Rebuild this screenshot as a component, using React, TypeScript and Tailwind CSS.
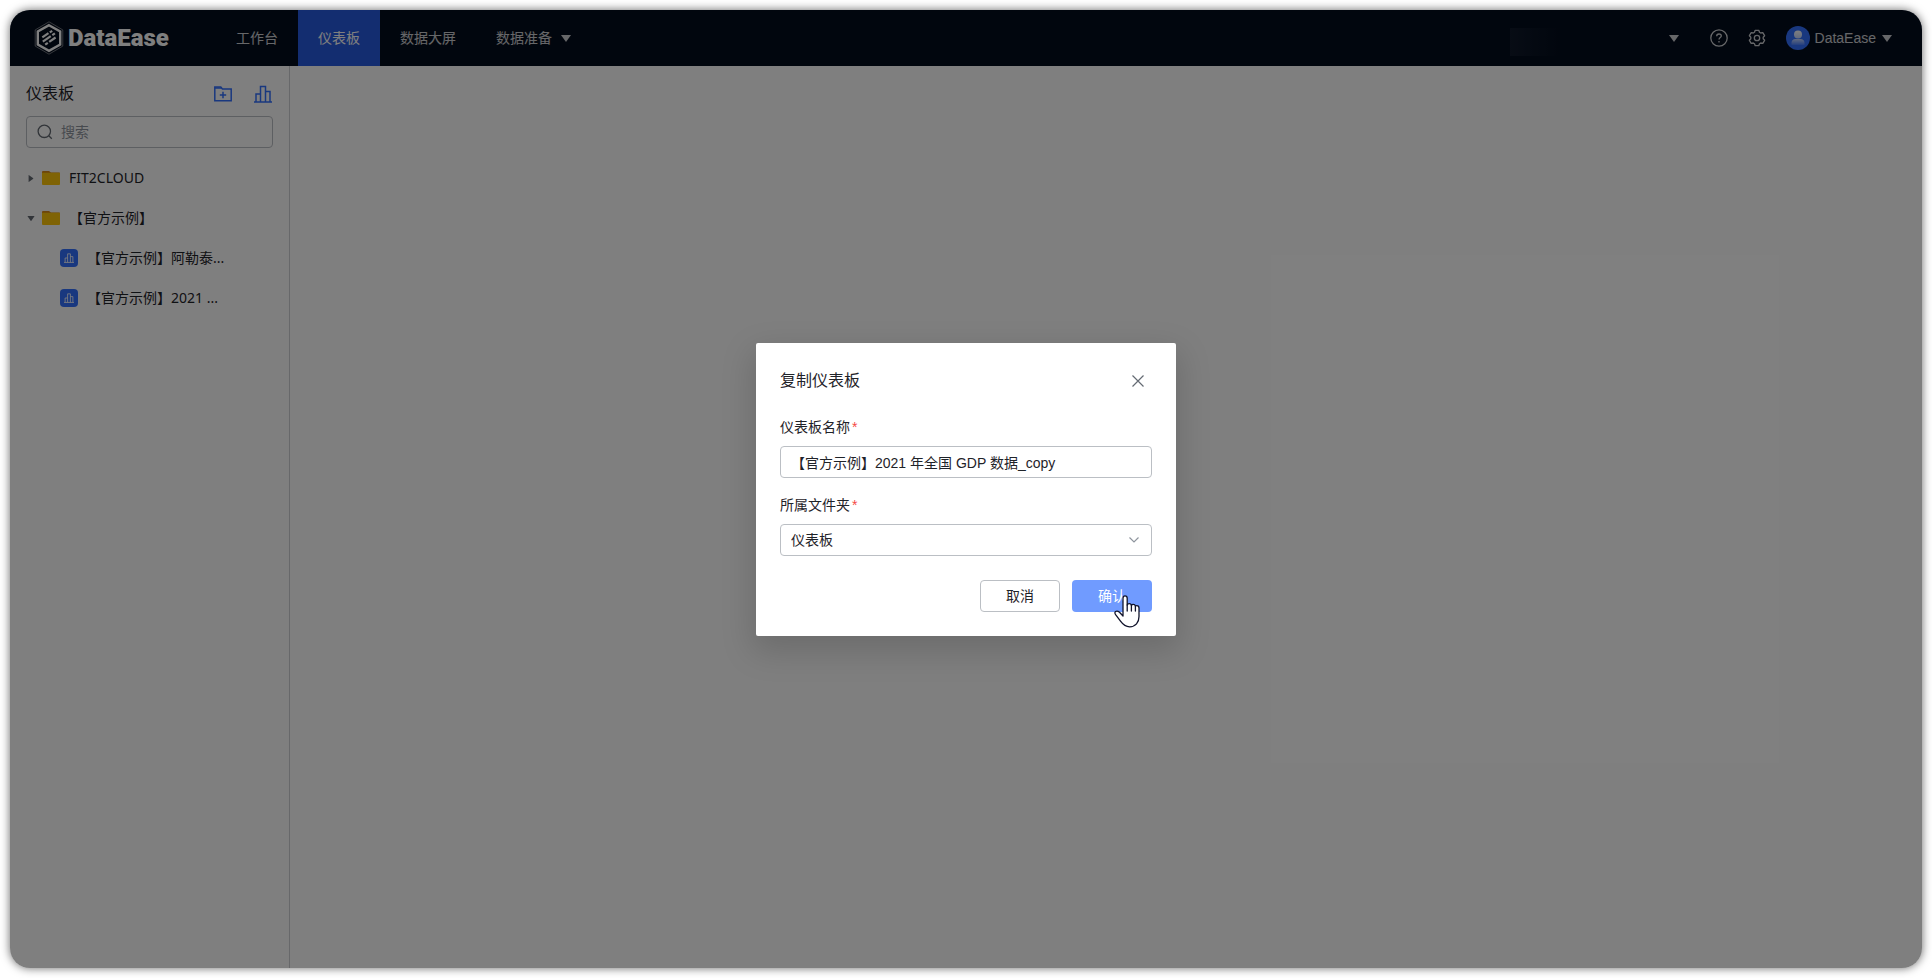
import { useState, type ReactNode } from "react";

function Caret({ className = "" }: { className?: string }) {
  return (
    <svg viewBox="0 0 10 7" className={`h-[7px] w-[10px] ${className}`} fill="currentColor" aria-hidden="true">
      <path d="M0 0h10L5 7z" />
    </svg>
  );
}

function LogoMark() {
  return (
    <svg viewBox="0 0 30 34" className="h-[34px] w-[30px]" fill="none" stroke="white" aria-hidden="true">
      <path d="M15 .8 28.800 8.900v16.200L15 33.200 1.200 25.100V8.900z" strokeWidth=".7" opacity=".6" />
      <path d="M15 4.200 26.200 10.500v13L15 29.800 3.800 23.500V10.500z" strokeWidth="2.400" />
      <g strokeWidth="2.200">
        <path d="m8.300 16.400 6.200-4.200" />
        <path d="m15.800 11.400 2.400-1.600" />
        <path d="m8.800 20.600 8-5.400" />
        <path d="m18.300 14.200 2.600-1.800" />
        <path d="m11.200 23.600 2.600-1.800" />
        <path d="m15.200 20.800 6.400-4.300" />
      </g>
    </svg>
  );
}

function FolderPlusIcon() {
  return (
    <svg viewBox="0 0 18 18" className="size-[18px]" fill="none" stroke="currentColor" strokeWidth="1.500" aria-hidden="true">
      <path d="M.8 15.800V2h6l1.600 2h8.800v11.800z" />
      <path d="M.8 2.900h6.800M9 6.800v6.400M5.800 10h6.400" />
    </svg>
  );
}

function ChartIcon({ className = "size-[18px]" }: { className?: string }) {
  return (
    <svg viewBox="0 0 18 18" className={className} fill="none" stroke="currentColor" strokeWidth="1.500" aria-hidden="true">
      <path d="M0 17h18M2 17V9h4.500M6.500 17V1.500h5V17M11.500 6.500H16V17" />
    </svg>
  );
}

function SearchIcon() {
  return (
    <svg viewBox="0 0 16 16" className="size-4 shrink-0 text-[#646a73]" fill="none" stroke="currentColor" strokeWidth="1.300" aria-hidden="true">
      <circle cx="7.300" cy="7.300" r="6.200" />
      <path d="m11.800 11.800 3 3" />
    </svg>
  );
}

function HelpIcon() {
  return (
    <svg viewBox="0 0 18 18" className="size-[18px]" fill="none" stroke="currentColor" strokeWidth="1.300" aria-hidden="true">
      <circle cx="9" cy="9" r="8.200" />
      <path d="M6.700 7.200C6.700 5.800 7.700 5 9 5s2.300.8 2.300 2c0 1.500-2.300 1.700-2.300 3.500" />
      <path d="M9 11.900v1.500" />
    </svg>
  );
}

function GearIcon() {
  return (
    <svg viewBox="0 0 18 18" className="size-[18px]" fill="none" stroke="currentColor" strokeWidth="1.300" strokeLinejoin="round" aria-hidden="true">
      <path d="M7.200 1.300h3.600l.7 2 1.200.7 2.100-.4 1.800 3.100L15.200 8.300v1.400l1.400 1.600-1.800 3.100-2.100-.4-1.200.7-.7 2H7.200l-.7-2-1.200-.7-2.100.4-1.800-3.100 1.400-1.600V8.300L1.400 6.700l1.800-3.100 2.100.4 1.200-.7z" />
      <circle cx="9" cy="9" r="2.700" />
    </svg>
  );
}

function Avatar() {
  return (
    <svg viewBox="0 0 24 24" className="size-6" aria-hidden="true">
      <defs>
        <linearGradient id="bust" x1="0" y1="0" x2="0" y2="1">
          <stop offset="0" stopColor="#fff" stopOpacity=".7" />
          <stop offset="1" stopColor="#fff" stopOpacity=".1" />
        </linearGradient>
        <linearGradient id="head" x1="0" y1="0" x2="0" y2="1">
          <stop offset="0" stopColor="#fff" />
          <stop offset="1" stopColor="#fff" stopOpacity=".7" />
        </linearGradient>
      </defs>
      <circle cx="12" cy="12" r="12" fill="#3370ff" />
      <circle cx="12" cy="8.500" r="4" fill="url(#head)" />
      <path d="M5.500 19v-2.500a4 4 0 0 1 4-3.500h5a4 4 0 0 1 4 3.500V19z" fill="url(#bust)" />
    </svg>
  );
}

function FolderIcon() {
  return (
    <svg viewBox="0 0 18 14" className="h-[14px] w-[18px] shrink-0" aria-hidden="true">
      <path d="M0 1a1 1 0 0 1 1-1h6l2 1.500h8a1 1 0 0 1 1 1V6H0z" fill="#d98a1a" />
      <path d="M0 1.700h18V13a1 1 0 0 1-1 1H1a1 1 0 0 1-1-1z" fill="#ffc60a" />
    </svg>
  );
}

function HandCursor() {
  return (
    <svg viewBox="0 0 26 33" className="pointer-events-none absolute top-[15px] left-[42px] h-[33px] w-[26px]" aria-hidden="true">
      <path
        d="M9 21V3.200C9 1.700 9.900.8 11 .8s2.200.9 2.200 2.400V10c.3-.9 1.100-1.300 2-1.300 1.100 0 2 .6 2.200 1.600.4-.6 1-.9 1.800-.9 1.200 0 2 .7 2.200 1.700.3-.3.800-.5 1.400-.5 1.300 0 2.200.9 2.200 2.400v8.500c0 6-3.500 10.300-9.300 10.300-4.400 0-6.800-2.300-9.200-5.600L1.600 19.700c-.9-1.400-.8-2.500 0-3.100.9-.7 2.500-.5 3.900.7z"
        fill="white"
        stroke="#10132b"
        strokeWidth="1.300"
        strokeLinejoin="round"
      />
      <path d="M13.200 10v6M17.400 10.500v5.500M21.400 11.500v4.500" stroke="#10132b" strokeWidth="1.300" strokeLinecap="round" />
    </svg>
  );
}

function NavItem({ label, active, menu }: { label: string; active?: boolean; menu?: boolean }) {
  return (
    <a
      href="#"
      aria-current={active ? "page" : undefined}
      className={`flex h-full items-center gap-[9px] px-5 whitespace-nowrap ${active ? "bg-[#265ae0] text-white" : "text-white/80"}`}
    >
      {label}
      {menu && <Caret />}
    </a>
  );
}

function TreeRow({ label, children }: { label: string; children: ReactNode }) {
  return (
    <li className="flex h-10 items-center whitespace-nowrap">
      {children}
      {label}
    </li>
  );
}

function Sidebar() {
  return (
    <aside className="w-[280px] shrink-0 border-r border-[#cfd1d4] px-4 pt-[13px] text-[#1f2329]">
      <div className="flex h-[30px] items-center justify-between pr-px">
        <h1 className="text-base">仪表板</h1>
        <div className="flex gap-[22px] text-[#3370ff]">
          <button type="button" aria-label="新建文件夹">
            <FolderPlusIcon />
          </button>
          <button type="button" aria-label="新建仪表板">
            <ChartIcon />
          </button>
        </div>
      </div>
      <label className="mt-[7px] flex h-8 items-center gap-2 rounded border border-[#bbbfc4] px-[10px]">
        <SearchIcon />
        <input type="search" aria-label="搜索" placeholder="搜索" className="w-full bg-transparent text-sm outline-none placeholder:text-[#8f959e]" />
      </label>
      <ul className="mt-[10px] font-['Noto_Sans','Noto_Sans_CJK_SC',sans-serif] text-sm">
        <TreeRow label="FIT2CLOUD">
          <Caret className="mr-[6px] -rotate-90 scale-75 text-[#646a73]" />
          <span className="mr-[9px]">
            <FolderIcon />
          </span>
        </TreeRow>
        <TreeRow label="【官方示例】">
          <Caret className="mr-[6px] scale-75 text-[#646a73]" />
          <span className="mr-[9px]">
            <FolderIcon />
          </span>
        </TreeRow>
        {["【官方示例】阿勒泰...", "【官方示例】2021 ..."].map((label) => (
          <TreeRow key={label} label={label}>
            <span className="mr-[9px] ml-[34px] flex size-[18px] shrink-0 items-center justify-center rounded bg-[#3370ff] text-white">
              <ChartIcon className="size-[10px]" />
            </span>
          </TreeRow>
        ))}
      </ul>
    </aside>
  );
}

function CopyDialog() {
  const [name, setName] = useState("【官方示例】2021 年全国 GDP 数据_copy");
  const field = "h-8 w-full rounded border border-[#bbbfc4] bg-white text-sm text-[#1f2329] outline-none";
  return (
    <form
      role="dialog"
      aria-labelledby="dialog-title"
      className="w-[420px] rounded-xs bg-white px-6 pt-[26px] pb-6 text-sm text-[#1f2329] shadow-[0_12px_32px_4px_rgba(0,0,0,0.15)]"
    >
      <div className="mb-[23px] flex h-6 items-center justify-between pr-2">
        <h2 id="dialog-title" className="text-base">
          复制仪表板
        </h2>
        <button type="button" aria-label="关闭" className="text-[#646a73]">
          <svg viewBox="0 0 12 12" className="size-3" fill="none" stroke="currentColor" strokeWidth="1.200">
            <path d="m.5.5 11 11M11.500.5l-11 11" />
          </svg>
        </button>
      </div>
      <label htmlFor="board-name" className="mb-2 block h-[22px] leading-[22px]">
        仪表板名称<span className="ml-0.5 text-[#f54a45]">*</span>
      </label>
      <input id="board-name" value={name} onChange={(e) => setName(e.target.value)} className={`${field} px-[10px]`} />
      <label htmlFor="board-folder" className="mt-4 mb-2 block h-[22px] leading-[22px]">
        所属文件夹<span className="ml-0.5 text-[#f54a45]">*</span>
      </label>
      <div className="relative">
        <select id="board-folder" className={`${field} appearance-none px-[10px]`}>
          <option>仪表板</option>
        </select>
        <svg viewBox="0 0 10 6" className="pointer-events-none absolute top-[13px] right-[13px] h-[6px] w-[10px]" fill="none" stroke="#8f959e" strokeWidth="1.200">
          <path d="m.5.5 4.500 4.500L9.500.5" />
        </svg>
      </div>
      <div className="mt-6 flex justify-end gap-3">
        <button type="button" className="h-8 w-20 rounded border border-[#bbbfc4]">
          取消
        </button>
        <button type="button" className="relative h-8 w-20 rounded bg-[#709bff] text-white">
          确认
          <HandCursor />
        </button>
      </div>
    </form>
  );
}

export default function App() {
  return (
    <div className="h-screen bg-white p-[10px] font-['Liberation_Sans','Noto_Sans_CJK_SC',sans-serif] text-sm">
      <div className="relative flex h-full flex-col overflow-hidden rounded-[20px] bg-white shadow-[0_0_10px_rgba(0,0,0,0.6)]">
        <header className="flex h-14 shrink-0 items-center bg-[#030c1c] pr-[30px] pl-6 text-white/80">
          <a href="#" className="flex w-[182px] items-center gap-1 font-['Roboto',sans-serif] text-[24px] leading-7 font-black text-white">
            <LogoMark />
            DataEase
          </a>
          <nav className="flex h-full">
            <NavItem label="工作台" />
            <NavItem label="仪表板" active />
            <NavItem label="数据大屏" />
            <NavItem label="数据准备" menu />
          </nav>
          <div className="ml-auto flex items-center">
            <button type="button" aria-label="切换组织" className="mr-[31px] flex w-[169px] items-center justify-between">
              <span className="mt-2 h-7 w-[50px] bg-linear-to-r from-[#10192a] to-[#030c1c]" />
              <Caret />
            </button>
            <button type="button" aria-label="帮助" className="mr-5">
              <HelpIcon />
            </button>
            <button type="button" aria-label="系统设置" className="mr-5">
              <GearIcon />
            </button>
            <button type="button" className="flex items-center gap-[5px]">
              <Avatar />
              DataEase
              <Caret className="ml-px" />
            </button>
          </div>
        </header>
        <div className="flex min-h-0 flex-1">
          <Sidebar />
          <main className="flex-1" />
        </div>
        <div className="absolute inset-0 flex items-center justify-center bg-black/50">
          <CopyDialog />
        </div>
      </div>
    </div>
  );
}
